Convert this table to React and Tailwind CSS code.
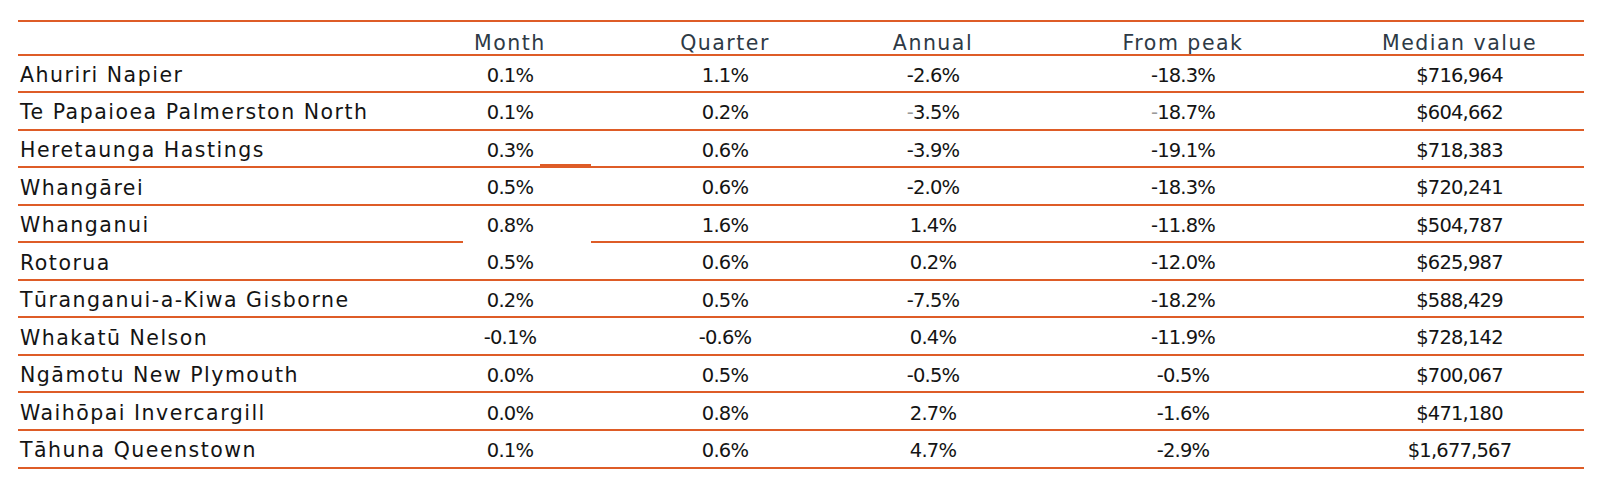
import React from 'react';

const rows = [
  ['Ahuriri Napier', '0.1%', '1.1%', '-2.6%', '-18.3%', '$716,964'],
  ['Te Papaioea Palmerston North', '0.1%', '0.2%', '-3.5%', '-18.7%', '$604,662'],
  ['Heretaunga Hastings', '0.3%', '0.6%', '-3.9%', '-19.1%', '$718,383'],
  ['Whangārei', '0.5%', '0.6%', '-2.0%', '-18.3%', '$720,241'],
  ['Whanganui', '0.8%', '1.6%', '1.4%', '-11.8%', '$504,787'],
  ['Rotorua', '0.5%', '0.6%', '0.2%', '-12.0%', '$625,987'],
  ['Tūranganui-a-Kiwa Gisborne', '0.2%', '0.5%', '-7.5%', '-18.2%', '$588,429'],
  ['Whakatū Nelson', '-0.1%', '-0.6%', '0.4%', '-11.9%', '$728,142'],
  ['Ngāmotu New Plymouth', '0.0%', '0.5%', '-0.5%', '-0.5%', '$700,067'],
  ['Waihōpai Invercargill', '0.0%', '0.8%', '2.7%', '-1.6%', '$471,180'],
  ['Tāhuna Queenstown', '0.1%', '0.6%', '4.7%', '-2.9%', '$1,677,567'],
];

const grid = 'grid grid-cols-[387px_210px_220px_196px_304px_249px]';

// row 2 has a faded minus sign in the original
const Cell = ({ value, faded }) => {
  if (faded && value.startsWith('-')) {
    return (
      <span>
        <span className='text-[#9a9a9a]'>-</span>
        {value.slice(1)}
      </span>
    );
  }
  return <span>{value}</span>;
};

export default function App() {
  return (
    <div
      className='w-[1605px] h-[490px] bg-white pt-[20px] pl-[18px]'
      style={{ fontFamily: '"DejaVu Sans", sans-serif' }}
    >
      <div className='relative w-[1566px] border-t-2 border-[#de5c27]'>
        <div className={`${grid} h-[33.5px] pt-[6px] items-center border-b-2 border-[#de5c27] text-[20.5px] tracking-[1.5px] text-[#2e3a46]`}>
          <div />
          <div className='text-center'>Month</div>
          <div className='text-center'>Quarter</div>
          <div className='text-center'>Annual</div>
          <div className='text-center'>From peak</div>
          <div className='text-center'>Median value</div>
        </div>
        {rows.map((r, i) => (
          <div
            key={r[0]}
            className={`${grid} h-[37.55px] pt-[4px] items-center border-b-2 border-[#de5c27] text-[19.5px] tracking-[-0.8px] text-[#141414]`}
          >
            <div className='pl-[2px] text-[20.5px] tracking-[1.5px]'>{r[0]}</div>
            {r.slice(1).map((v, j) => (
              <div key={j} className='text-center'>
                <Cell value={v} faded={i === 1 && (j === 2 || j === 3)} />
              </div>
            ))}
          </div>
        ))}
        {/* little glitches in the source rules */}
        <div className='absolute left-[522px] top-[142px] w-[51px] h-[2px] bg-[#de5c27]' />
        <div className='absolute left-[445px] top-[219px] w-[128px] h-[3px] bg-white' />
      </div>
    </div>
  );
}
